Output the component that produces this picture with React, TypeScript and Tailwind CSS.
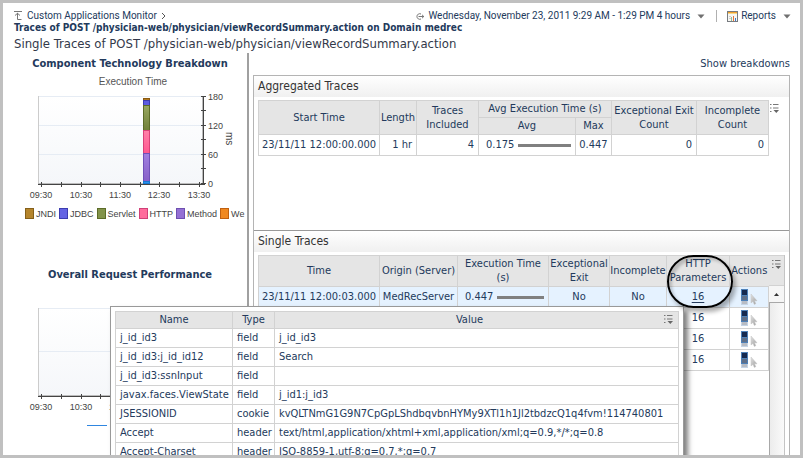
import React from "react";

const border = "border border-[#d2d2d2]";
const headCell = `${border} bg-[#e5e5e5] p-0 text-center font-normal`;

function MenuIcon() {
  return (
    <svg width="10" height="10" viewBox="0 0 10 10" className="block" aria-hidden="true">
      <path d="M0 0.5h1.5M3 0.5h5.500M0 4h1.5M3 4h5.500M0 7.500h1.5" stroke="#777" fill="none" />
      <path d="M3.500 6h5.500L6.300 9z" fill="#666" />
    </svg>
  );
}

function Caret() {
  return (
    <svg width="8" height="5" viewBox="0 0 8 5" aria-hidden="true">
      <path d="M0.5 0.5h7L4 4.5z" fill="#707070" />
    </svg>
  );
}

function UpLevelIcon() {
  return (
    <svg width="9" height="10" viewBox="0 0 9 10" aria-hidden="true">
      <path d="M0 0.5h8M3.5 2v6.500h4M1 4.5l2.5-2.2L6 4.5" stroke="#777" fill="none" />
    </svg>
  );
}

function RangeIcon() {
  return (
    <svg width="10" height="9" viewBox="0 0 10 9" aria-hidden="true">
      <path d="M6 2A2.800 2.800 0 1 0 6 7M3.5 4.5H9M7 2.800l1.800 1.700-1.800 1.700" stroke="#777" fill="none" />
    </svg>
  );
}

function ReportIcon() {
  return (
    <svg width="11" height="11" viewBox="0 0 11 11" shapeRendering="crispEdges" aria-hidden="true">
      <rect x="0.5" y="0.5" width="10" height="10" fill="#f6f6f2" stroke="#777b80" />
      <path d="M1 1.5h9" stroke="#f0a030" />
      <path d="M1 2.5h9" stroke="#f8d888" />
      <path d="M2 5.5h2M2 7.5h2" stroke="#cfcfcf" />
      <path d="M4.5 6v4" stroke="#8fba94" />
      <path d="M6.5 5v5" stroke="#e8743a" />
      <path d="M8.5 7v3" stroke="#3a78c8" />
    </svg>
  );
}

function ActionIcon() {
  return (
    <svg width="17" height="17" viewBox="0 0 17 17" aria-hidden="true">
      <defs>
        <linearGradient id="cursor" x1="0" y1="0" x2="1" y2="1">
          <stop offset="0" stopColor="#e4e4e4" />
          <stop offset="1" stopColor="#989898" />
        </linearGradient>
      </defs>
      <g shapeRendering="crispEdges">
        <rect x="0" y="0" width="7" height="12" fill="#4d80b8" />
        <rect x="1" y="1" width="5" height="5" fill="#16294f" />
        <rect x="1" y="7" width="5" height="4" fill="#5f6f88" />
        <rect x="0" y="12" width="7" height="4" fill="#c4d4e6" />
        <rect x="1" y="12" width="5" height="3" fill="#b8bcc4" />
      </g>
      <path d="M10 5v9l2-1.600 1.300 3 1.500-.7-1.300-2.900H16z" fill="url(#cursor)" stroke="#c4c4c4" strokeWidth="0.5" />
    </svg>
  );
}

function ValueBar({ value }: { value: string }) {
  return (
    <div className="flex items-center gap-1 pr-1 pl-[7px]">
      <span>{value}</span>
      <span className="h-[3px] flex-1 bg-[#808080]" />
    </div>
  );
}

const chartFont = "font-['Liberation_Sans',Arial,sans-serif]";

const segments = [
  { y: 9, h: 2, fill: "#b07820", stroke: "#8a5a10" },
  { y: 11, h: 5, fill: "#5c5ce0", stroke: "#3c3cb0" },
  { y: 16, h: 25, fill: "url(#servlet)", stroke: "#5c6c28" },
  { y: 41, h: 23, fill: "url(#http)", stroke: "#d84078" },
  { y: 64, h: 28, fill: "url(#method)", stroke: "#7050b8" },
  { y: 92, h: 2, fill: "#2890f0", stroke: "#1878d0" },
];

const hours = [
  { x: 38, label: "09:30" },
  { x: 78, label: "10:30" },
  { x: 117, label: "11:30" },
  { x: 156, label: "12:30" },
  { x: 196, label: "13:30" },
];

function PlotArea({ lines }: { lines: number[] }) {
  return (
    <>
      <rect x="35" y="7" width="165" height="87" fill="url(#plot)" />
      {lines.map((y) => (
        <path key={y} d={`M35 ${y}.5h165`} stroke="#e6ecf4" />
      ))}
      <path d="M35.5 7v88" stroke="#cccccc" />
      <path d="M35 94.5h165" stroke="#bbb" />
      <path d="M35 95.5h167" stroke="#444" />
      {[38, 58, 78, 97, 117, 137, 156, 176, 196].map((x) => (
        <path key={x} d={`M${x}.5 93v5`} stroke="#444" />
      ))}
      {hours.map((h) => (
        <text key={h.x} x={h.x} y="109" textAnchor="middle" fontSize="9" fill="#444">
          {h.label}
        </text>
      ))}
    </>
  );
}

function ExecutionChart() {
  return (
    <svg width="244" height="112" viewBox="0 0 244 112" className={chartFont} role="img" aria-label="Execution Time">
      <defs>
        <linearGradient id="plot" x1="0" y1="0" x2="0" y2="1">
          <stop offset="0" stopColor="#ffffff" />
          <stop offset="1" stopColor="#f5f7fa" />
        </linearGradient>
        <linearGradient id="servlet" x1="0" y1="0" x2="0" y2="1">
          <stop offset="0" stopColor="#98a860" />
          <stop offset="1" stopColor="#708038" />
        </linearGradient>
        <linearGradient id="http" x1="0" y1="0" x2="0" y2="1">
          <stop offset="0" stopColor="#ff80a8" />
          <stop offset="1" stopColor="#ff5890" />
        </linearGradient>
        <linearGradient id="method" x1="0" y1="0" x2="0" y2="1">
          <stop offset="0" stopColor="#a080e0" />
          <stop offset="1" stopColor="#8860c8" />
        </linearGradient>
      </defs>
      <PlotArea lines={[7, 36, 65]} />
      {segments.map((s) => (
        <rect key={s.y} x="140.5" y={s.y + 0.5} width="6" height={s.h} fill={s.fill} stroke={s.stroke} />
      ))}
      <path d="M199.5 7v88" stroke="#bbb" />
      <path d="M200.5 7v88" stroke="#444" />
      {[7, 21, 36, 50, 65, 79, 94].map((y) => (
        <path key={y} d={`M198 ${y}.5h5`} stroke="#444" />
      ))}
      <g fontSize="9" fill="#444">
        <text x="205" y="11">180</text>
        <text x="205" y="40">120</text>
        <text x="205" y="69">60</text>
        <text x="205" y="98">0</text>
        <text transform="translate(223 43) rotate(90)" fontSize="10">ms</text>
      </g>
    </svg>
  );
}

function PerformanceChart() {
  return (
    <svg width="244" height="128" viewBox="0 0 244 128" className={chartFont} role="img" aria-label="Overall Request Performance">
      <PlotArea lines={[7, 50]} />
      <text x="206" y="12" fontSize="9" fill="#444">110</text>
      <path d="M84 124.5h20" stroke="#2f86e0" />
    </svg>
  );
}

const legend = [
  { name: "JNDI", box: "border-[#85601a] bg-[#b5852c]" },
  { name: "JDBC", box: "border-[#3c3cb0] bg-[#6464e4]" },
  { name: "Servlet", box: "border-[#5c6c28] bg-[#82934a]" },
  { name: "HTTP", box: "border-[#d04078] bg-[#ff6c9c]" },
  { name: "Method", box: "border-[#6e50b0] bg-[#9470d4]" },
  { name: "We", box: "border-[#c06010] bg-[#f08820]" },
];

const traces = ["23/11/11 12:00:03.000", "", "", ""];

const parameters = [
  ["j_id_id3", "field", "j_id_id3"],
  ["j_id_id3:j_id_id12", "field", "Search"],
  ["j_id_id3:ssnInput", "field", ""],
  ["javax.faces.ViewState", "field", "j_id1:j_id3"],
  ["JSESSIONID", "cookie", "kvQLTNmG1G9N7CpGpLShdbqvbnHYMy9XTl1h1Jl2tbdzcQ1q4fvm!114740801"],
  ["Accept", "header", "text/html,application/xhtml+xml,application/xml;q=0.9,*/*;q=0.8"],
  ["Accept-Charset", "header", "ISO-8859-1,utf-8;q=0.7,*;q=0.7"],
];

function Header() {
  return (
    <header className="pl-[11px] whitespace-nowrap">
      <div className="flex h-[17px] items-end justify-between pr-[9px] font-['Roboto',sans-serif] text-[10px] leading-3">
        <nav className="flex items-center gap-1">
          <UpLevelIcon />
          <a href="#monitor">Custom Applications Monitor</a>
          <svg width="6" height="8" viewBox="0 0 6 8" aria-hidden="true">
            <path d="M1 1l3 3-3 3" stroke="#555" fill="none" />
          </svg>
        </nav>
        <div className="flex items-center">
          <button type="button" className="flex items-center gap-[3px]">
            <RangeIcon />
            Wednesday, November 23, 2011 9:29 AM - 1:29 PM 4 hours
            <span className="pl-1"><Caret /></span>
          </button>
          <span className="mr-[10px] ml-[11px] h-3 w-px bg-[#b0b0b0]" />
          <button type="button" className="flex items-center gap-[3px]">
            <ReportIcon />
            Reports
            <span className="pl-1"><Caret /></span>
          </button>
        </div>
      </div>
      <h2 className="text-[10px] leading-3 font-bold">
        Traces of POST /physician-web/physician/viewRecordSummary.action on Domain medrec
      </h2>
      <h1 className="text-[13px] leading-[19px] text-[#33394a]">
        Single Traces of POST /physician-web/physician/viewRecordSummary.action
      </h1>
    </header>
  );
}

function Charts() {
  return (
    <section className="w-[246px] shrink-0 overflow-hidden border-r-2 border-[#a0a0a0] whitespace-nowrap">
      <h3 className="pl-[10px] text-center text-[11px] leading-[22px] font-bold">Component Technology Breakdown</h3>
      <p className={`${chartFont} pl-4 text-center text-[10px] leading-[14px] text-[#555]`}>Execution Time</p>
      <ExecutionChart />
      <ul className={`${chartFont} flex h-5 items-center gap-[3px] pt-[5px] pl-[22px] text-[9px] leading-3 text-[#444]`}>
        {legend.map((item) => (
          <li key={item.name} className="flex items-center gap-[2px]">
            <span className={`h-[11px] w-[9px] border ${item.box}`} />
            {item.name}
          </li>
        ))}
      </ul>
      <h3 className="mt-[43px] pl-[10px] text-center text-[11px] leading-[22px] font-bold">Overall Request Performance</h3>
      <div className="pt-[15px]">
        <PerformanceChart />
      </div>
    </section>
  );
}

function PanelTitle({ children }: { children: React.ReactNode }) {
  return (
    <h3 className="h-[21px] bg-linear-to-b from-white to-[#f0f0f0] pl-1 text-[12px] leading-[21px] text-[#333]">{children}</h3>
  );
}

function AggregatedTraces() {
  return (
    <section className="h-[155px] border-t border-[#b4b4b4]">
      <PanelTitle>Aggregated Traces</PanelTitle>
      <div className="flex items-start pt-[3px] pr-[9px] pl-1">
        <table className="w-full flex-1 table-fixed border-collapse">
          <colgroup>
            <col className="w-[121px]" />
            <col className="w-[37px]" />
            <col className="w-[62px]" />
            <col />
            <col className="w-[36px]" />
            <col className="w-[85px]" />
            <col className="w-[72px]" />
          </colgroup>
          <thead>
            <tr className="h-[17px]">
              <th rowSpan={2} className={headCell}>Start Time</th>
              <th rowSpan={2} className={headCell}>Length</th>
              <th rowSpan={2} className={headCell}>Traces Included</th>
              <th colSpan={2} className={headCell}>Avg Execution Time (s)</th>
              <th rowSpan={2} className={headCell}>Exceptional Exit Count</th>
              <th rowSpan={2} className={headCell}>Incomplete Count</th>
            </tr>
            <tr className="h-[17px]">
              <th className={headCell}>Avg</th>
              <th className={headCell}>Max</th>
            </tr>
          </thead>
          <tbody>
            <tr className="h-[21px]">
              <td className={`${border} p-0 text-center`}>23/11/11 12:00:00.000</td>
              <td className={`${border} py-0 pr-1 text-right`}>1 hr</td>
              <td className={`${border} py-0 pr-1 text-right`}>4</td>
              <td className={`${border} p-0`}><ValueBar value="0.175" /></td>
              <td className={`${border} p-0 text-center`}>0.447</td>
              <td className={`${border} py-0 pr-1 text-right`}>0</td>
              <td className={`${border} py-0 pr-1 text-right`}>0</td>
            </tr>
          </tbody>
        </table>
        <button type="button" aria-label="Table options" className="mt-1 ml-px">
          <MenuIcon />
        </button>
      </div>
    </section>
  );
}

function SingleTraces() {
  return (
    <section className="flex min-h-0 flex-1 flex-col border-t border-[#999]">
      <PanelTitle>Single Traces</PanelTitle>
      <div className="flex min-h-0 flex-1 items-start pt-[3px] pr-1 pl-1">
        <table className="w-full flex-1 table-fixed border-collapse">
          <colgroup>
            <col className="w-[121px]" />
            <col className="w-[78px]" />
            <col />
            <col className="w-[61px]" />
            <col className="w-[57px]" />
            <col className="w-[63px]" />
            <col className="w-[39px]" />
          </colgroup>
          <thead>
            <tr className="h-[31px]">
              <th className={headCell}>Time</th>
              <th className={headCell}>Origin (Server)</th>
              <th className={headCell}>Execution Time (s)</th>
              <th className={headCell}>Exceptional Exit</th>
              <th className={headCell}>Incomplete</th>
              <th className={`${headCell} relative`}>
                HTTP Parameters
                <span className="pointer-events-none absolute -top-px left-0 z-30 h-[53px] w-[66px] rounded-[27px] border-2 border-black shadow-[3px_4px_4px_#00000050,inset_3px_3px_3px_#00000030]" />
              </th>
              <th className={`${headCell} border-r-0`}>Actions</th>
            </tr>
          </thead>
          <tbody>
            {traces.map((time, i) => (
              <tr key={i} className={i === 0 ? "h-[21px] bg-[#e5f2ff]" : "h-[21px]"}>
                <td className={`${border} p-0 text-center`}>{time}</td>
                <td className={`${border} p-0 text-center`}>{time && "MedRecServer"}</td>
                <td className={`${border} p-0`}>{time && <ValueBar value="0.447" />}</td>
                <td className={`${border} p-0 text-center`}>{time && "No"}</td>
                <td className={`${border} p-0 text-center`}>{time && "No"}</td>
                <td className={`${border} p-0 text-center`}>
                  <a href="#parameters" className={i === 0 ? "underline underline-offset-2" : ""}>16</a>
                </td>
                <td className={`${border} p-0`}>
                  <button type="button" aria-label="Open trace" className="mx-auto block">
                    <ActionIcon />
                  </button>
                </td>
              </tr>
            ))}
          </tbody>
        </table>
        <div className="flex w-4 shrink-0 flex-col self-stretch border-r border-[#c4c4c4]">
          <div className="h-[31px] border-y border-[#d2d2d2] bg-[#e5e5e5] pt-1 pl-[3px]">
            <button type="button" aria-label="Table options" className="block">
              <MenuIcon />
            </button>
          </div>
          <button type="button" aria-label="Scroll up" className="flex h-4 items-center justify-center bg-[#f6f6f6]">
            <svg width="5" height="3" viewBox="0 0 5 3" aria-hidden="true">
              <path d="M0 3h5L2.500 0z" fill="#333" />
            </svg>
          </button>
          <div className="flex-1 border-t border-l border-[#a8a8a8] bg-linear-to-r from-[#ececec] to-[#fafafa]" />
        </div>
      </div>
    </section>
  );
}

function ParametersPopup() {
  return (
    <div className="absolute top-[303px] left-[107px] z-20 w-[574px] border border-[#999] bg-white p-1 shadow-[4px_4px_5px_#00000080]">
      <table className="w-full table-fixed border-collapse whitespace-nowrap">
        <colgroup>
          <col className="w-[117px]" />
          <col className="w-[42px]" />
          <col />
        </colgroup>
        <thead>
          <tr className="h-[17px]">
            <th className={headCell}>Name</th>
            <th className={headCell}>Type</th>
            <th className={headCell}>
              <div className="flex items-center pr-1">
                <span className="flex-1">Value</span>
                <button type="button" aria-label="Table options">
                  <MenuIcon />
                </button>
              </div>
            </th>
          </tr>
        </thead>
        <tbody>
          {parameters.map(([name, type, value]) => (
            <tr key={name} className="h-[19px]">
              <td className={`${border} py-0 pl-1`}>{name}</td>
              <td className={`${border} py-0 pl-1`}>{type}</td>
              <td className={`${border} py-0 pl-1`}>{value}</td>
            </tr>
          ))}
        </tbody>
      </table>
    </div>
  );
}

export default function App() {
  return (
    <main className="relative flex h-screen flex-col overflow-hidden border-3 border-[#c0c0c0] bg-white pt-[2px] font-['DejaVu_Sans_Condensed','Noto_Sans',sans-serif] text-[11px] leading-[14px] text-[#233a5c]">
      <Header />
      <div className="flex min-h-0 flex-1">
        <Charts />
        <div className="flex min-w-0 flex-1 flex-col pr-[10px] pl-1">
          <div className="flex h-[22px] items-center justify-end">
            <a href="#breakdowns">Show breakdowns</a>
          </div>
          <div className="flex min-h-0 flex-1 flex-col border-x border-[#b4b4b4]">
            <AggregatedTraces />
            <SingleTraces />
          </div>
        </div>
      </div>
      <ParametersPopup />
    </main>
  );
}
